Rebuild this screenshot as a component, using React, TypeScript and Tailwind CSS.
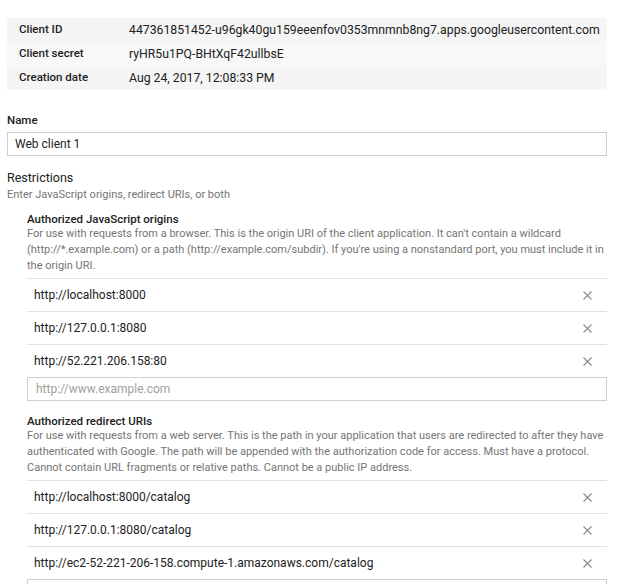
import React from 'react';

const details = [
  { label: 'Client ID', value: '447361851452-u96gk40gu159eeenfov0353mnmnb8ng7.apps.googleusercontent.com', bg: 'bg-[#f5f5f5]' },
  { label: 'Client secret', value: 'ryHR5u1PQ-BHtXqF42ullbsE', bg: 'bg-[#f8f8f8]' },
  { label: 'Creation date', value: 'Aug 24, 2017, 12:08:33 PM', bg: 'bg-[#f5f5f5]' },
];

const origins = ['http://localhost:8000', 'http://127.0.0.1:8080', 'http://52.221.206.158:80'];
const redirects = [
  'http://localhost:8000/catalog',
  'http://127.0.0.1:8080/catalog',
  'http://ec2-52-221-206-158.compute-1.amazonaws.com/catalog',
];

function CloseIcon() {
  return (
    <svg width="9" height="9" viewBox="0 0 9 9" className="shrink-0">
      <path d="M0.5 0.5L8.5 8.5M8.5 0.5L0.5 8.5" stroke="#8a8a8a" strokeWidth="1.1" fill="none" />
    </svg>
  );
}

function UriList({ title, help, items }: { title: string; help: string; items: string[] }) {
  return (
    <div className="pl-[20px]">
      <div className="text-[11.5px] leading-[14px] font-medium text-[#212121]">{title}</div>
      <p className="text-[11px] leading-[16px] text-[#757575] mb-[4px]">{help}</p>
      {items.map((u) => (
        <div key={u} className="flex items-center justify-between h-[33px] border-t border-[#e0e0e0] pl-[7px] pr-[15px]">
          <span className="text-[12px] text-[#212121]">{u}</span>
          <CloseIcon />
        </div>
      ))}
      <input
        className="block w-full h-[24px] border border-[#cfcfcf] px-[8px] text-[12px] text-[#212121] placeholder:text-[#a0a0a0] outline-none"
        placeholder="http://www.example.com"
      />
    </div>
  );
}

export default function App() {
  return (
    <div className="min-h-screen bg-white pl-[7px] pr-[10px] pt-[18px] pb-8 w-[617px] overflow-hidden" style={{ fontFamily: 'Roboto, "Liberation Sans", sans-serif' }}>
      <div>
        {details.map((d) => (
          <div key={d.label} className={`flex h-[24px] items-center ${d.bg}`}>
            <div className="w-[122px] shrink-0 pl-[12px] text-[11.5px] font-medium text-[#212121]">{d.label}</div>
            <div className="text-[12.25px] text-[#212121] whitespace-nowrap">{d.value}</div>
          </div>
        ))}
      </div>

      <div className="mt-[22px] text-[11.5px] leading-[16px] font-medium text-[#212121]">Name</div>
      <input
        className="mt-[4px] block w-full h-[24px] border border-[#cfcfcf] px-[7px] text-[12px] text-[#212121] outline-none"
        defaultValue="Web client 1"
      />

      <div className="mt-[13px] text-[12.5px] leading-[18px] text-[#212121]">Restrictions</div>
      <div className="text-[11px] leading-[16px] text-[#757575]">Enter JavaScript origins, redirect URIs, or both</div>

      <div className="mt-[9px]">
        <UriList
          title="Authorized JavaScript origins"
          help="For use with requests from a browser. This is the origin URI of the client application. It can't contain a wildcard (http://*.example.com) or a path (http://example.com/subdir). If you're using a nonstandard port, you must include it in the origin URI."
          items={origins}
        />
      </div>

      <div className="mt-[13px]">
        <UriList
          title="Authorized redirect URIs"
          help="For use with requests from a web server. This is the path in your application that users are redirected to after they have authenticated with Google. The path will be appended with the authorization code for access. Must have a protocol. Cannot contain URL fragments or relative paths. Cannot be a public IP address."
          items={redirects}
        />
      </div>
    </div>
  );
}
